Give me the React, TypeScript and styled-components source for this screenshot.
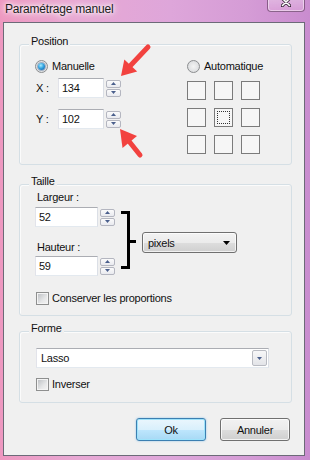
import styled, { createGlobalStyle } from 'styled-components';

const GlobalStyle = createGlobalStyle`
  html, body {
    margin: 0;
    padding: 0;
    background: #ffffff;
  }
  body {
    font-family: 'Liberation Sans', Arial, sans-serif;
    font-size: 11px;
    color: #000;
  }
  * {
    box-sizing: border-box;
  }
`;

const Window = styled.div`
  position: relative;
  width: 310px;
  height: 460px;
  display: flex;
  flex-direction: column;
  overflow: hidden;
  background: linear-gradient(
    90deg,
    #ee98c0 0%,
    #e8a8d4 25%,
    #dea6da 55%,
    #d59cd6 80%,
    #c98ccf 100%
  );
`;

const TitleBar = styled.div`
  height: 22px;
  flex-shrink: 0;
  display: flex;
  justify-content: space-between;
  align-items: flex-start;
  padding-left: 5px;
`;

const Title = styled.div`
  padding-top: 1px;
  font-size: 12px;
  line-height: 16px;
  letter-spacing: -0.2px;
  color: #1b1b1b;
  text-shadow: 0 0 6px #fff, 0 0 10px #fff, 0 0 3px rgba(255, 255, 255, 0.9);
`;

const CloseButton = styled.div`
  width: 38px;
  height: 20px;
  margin: -8px 5px 0 0;
  border: 1px solid rgba(90, 50, 90, 0.65);
  border-radius: 0 0 4px 4px;
  background: linear-gradient(180deg, rgba(255, 255, 255, 0.4), rgba(235, 180, 225, 0.35));
  box-shadow: inset 0 0 0 1px rgba(255, 255, 255, 0.45);
  display: flex;
  justify-content: center;
  align-items: flex-start;
  padding-top: 4px;
`;

const Client = styled.div`
  flex: 1;
  margin: 0 5px 4px 3px;
  border: 1px solid #6c6a78;
  background: #f0f0f0;
  display: flex;
  flex-direction: column;
  padding: 21px 12px 0 15px;
  letter-spacing: -0.25px;
  color: #111;
`;

const Group = styled.div<{ $h: number; $mt?: number }>`
  position: relative;
  height: ${(p) => p.$h}px;
  margin-top: ${(p) => p.$mt ?? 0}px;
  border: 1px solid #d5dfe5;
  border-radius: 3px;
  box-shadow: inset 1px 1px 0 #fbfbfb;
`;

const GroupLabel = styled.div`
  position: absolute;
  top: -10px;
  left: 9px;
  padding: 0 2px;
  line-height: 13px;
  background: #f0f0f0;
`;

const GroupBody = styled.div<{ $pt: number; $pl: number }>`
  padding: ${(p) => p.$pt}px 0 0 ${(p) => p.$pl}px;
`;

const SplitRow = styled.div`
  display: flex;
  align-items: flex-start;
`;

const Column = styled.div<{ $w?: number }>`
  display: flex;
  flex-direction: column;
  width: ${(p) => (p.$w ? `${p.$w}px` : 'auto')};
`;

const OptionRow = styled.div<{ $mt?: number; $pl?: number }>`
  display: flex;
  align-items: center;
  height: 13px;
  margin-top: ${(p) => p.$mt ?? 0}px;
  padding-left: ${(p) => p.$pl ?? 0}px;
`;

const Radio = styled.span<{ $checked?: boolean }>`
  width: 13px;
  height: 13px;
  border-radius: 50%;
  border: 1px solid #8b8d8f;
  background: radial-gradient(circle at 50% 50%, #f4f4f4 0%, #d4d6d8 100%);
  display: flex;
  align-items: center;
  justify-content: center;
  &::after {
    content: '';
    display: ${(p) => (p.$checked ? 'block' : 'none')};
    width: 7px;
    height: 7px;
    border-radius: 50%;
    background: radial-gradient(circle at 40% 35%, #a8ecff 0%, #35a4e0 45%, #0d4f9a 100%);
    box-shadow: 0 0 0 1px rgba(20, 70, 130, 0.35);
  }
`;

const Check = styled.span`
  width: 13px;
  height: 13px;
  border: 1px solid #8e8f8f;
  background: linear-gradient(135deg, #b9bcc0 0%, #e6e7e8 60%, #f4f4f4 100%);
  box-shadow: inset 0 0 0 1px #f4f4f4;
`;

const OptionText = styled.span<{ $gap: number }>`
  margin-left: ${(p) => p.$gap}px;
  line-height: 13px;
  white-space: nowrap;
`;

const FieldRow = styled.div<{ $mt?: number }>`
  display: flex;
  align-items: center;
  margin-top: ${(p) => p.$mt ?? 0}px;
`;

const FieldLabel = styled.span<{ $w: number }>`
  width: ${(p) => p.$w}px;
  padding-left: 1px;
`;

const Caption = styled.div<{ $mt?: number }>`
  line-height: 13px;
  padding-left: 2px;
  margin-top: ${(p) => p.$mt ?? 0}px;
  white-space: nowrap;
`;

const TextBox = styled.div<{ $w: number }>`
  width: ${(p) => p.$w}px;
  height: 20px;
  padding-left: 3px;
  line-height: 18px;
  background: #ffffff;
  border: 1px solid;
  border-color: #abadb3 #dbdfe6 #e3e9ef #e2e3ea;
`;

const Spinner = styled.div<{ $ml: number }>`
  display: flex;
  flex-direction: column;
  gap: 1px;
  margin-left: ${(p) => p.$ml}px;
`;

const SpinButton = styled.div`
  width: 15px;
  height: 8px;
  border: 1px solid #b4b6c0;
  border-radius: 2px;
  background: linear-gradient(180deg, #fbfbfb 0%, #e9eaef 100%);
  display: flex;
  align-items: center;
  justify-content: center;
`;

const AnchorGrid = styled.div`
  display: grid;
  grid-template-columns: repeat(3, 19px);
  grid-auto-rows: 19px;
  gap: 8px;
  margin-top: 8px;
`;

const AnchorCell = styled.div<{ $active?: boolean }>`
  border: 1px solid #7b7b7b;
  background: #f6f6f6;
  display: flex;
  align-items: center;
  justify-content: center;
  &::after {
    content: '';
    display: ${(p) => (p.$active ? 'block' : 'none')};
    width: 11px;
    height: 11px;
    border: 1px dotted #333;
  }
`;

const BracketMark = styled.svg`
  margin: 20px 0 0 5px;
  flex-shrink: 0;
`;

const UnitSelect = styled.div`
  width: 95px;
  height: 21px;
  margin: 41px 0 0 6px;
  padding: 0 6px 0 5px;
  border: 1px solid #707070;
  border-radius: 3px;
  background: linear-gradient(180deg, #f3f3f3 0%, #ebebeb 50%, #dddddd 51%, #cfcfcf 100%);
  box-shadow: inset 0 0 0 1px rgba(255, 255, 255, 0.7);
  display: flex;
  align-items: center;
  justify-content: space-between;
`;

const ComboBox = styled.div`
  width: 233px;
  height: 20px;
  padding: 0 1px 0 4px;
  background: #ffffff;
  border: 1px solid;
  border-color: #abadb3 #dbdfe6 #e3e9ef #e2e3ea;
  display: flex;
  align-items: center;
  justify-content: space-between;
`;

const ComboButton = styled.div`
  width: 15px;
  height: 16px;
  border: 1px solid #b9bbc2;
  border-radius: 2px;
  background: linear-gradient(180deg, #f7f7f8 0%, #e3e4e8 100%);
  display: flex;
  align-items: center;
  justify-content: center;
`;

const ButtonBar = styled.div`
  display: flex;
  justify-content: flex-end;
  gap: 14px;
  margin-top: 15px;
  padding-right: 2px;
`;

const DialogButton = styled.div<{ $default?: boolean }>`
  width: 70px;
  height: 23px;
  border-radius: 3px;
  display: flex;
  align-items: center;
  justify-content: center;
  border: 1px solid ${(p) => (p.$default ? '#3c7fb1' : '#707070')};
  background: ${(p) =>
    p.$default
      ? 'linear-gradient(180deg, #eaf6fd 0%, #d9f0fc 50%, #bee6fd 51%, #a7d9f5 100%)'
      : 'linear-gradient(180deg, #f2f2f2 0%, #ebebeb 50%, #dddddd 51%, #cfcfcf 100%)'};
  box-shadow: ${(p) =>
    p.$default
      ? 'inset 0 0 0 1px #9ee3fb, 0 0 2px rgba(60, 160, 230, 0.6)'
      : 'inset 0 0 0 1px rgba(255, 255, 255, 0.75)'};
`;

const Overlay = styled.svg`
  position: absolute;
  left: 0;
  top: 0;
  pointer-events: none;
`;

function SpinArrows() {
  return (
    <Spinner $ml={2}>
      <SpinButton>
        <svg width="5" height="3" viewBox="0 0 5 3">
          <path d="M0 3 L2.5 0 L5 3 Z" fill="#4a5f8c" />
        </svg>
      </SpinButton>
      <SpinButton>
        <svg width="5" height="3" viewBox="0 0 5 3">
          <path d="M0 0 L5 0 L2.5 3 Z" fill="#4a5f8c" />
        </svg>
      </SpinButton>
    </Spinner>
  );
}

const anchors = [0, 1, 2, 3, 4, 5, 6, 7, 8];

function App() {
  return (
    <>
      <GlobalStyle />
      <Window>
        <TitleBar>
          <Title>Paramétrage manuel</Title>
          <CloseButton>
            <svg width="10" height="10" viewBox="0 0 10 10">
              <path d="M1 1 L9 9 M9 1 L1 9" stroke="#3a2a3a" strokeWidth="3.2" strokeLinecap="round" />
              <path d="M1.5 1.5 L8.5 8.5 M8.5 1.5 L1.5 8.5" stroke="#ffffff" strokeWidth="1.6" strokeLinecap="round" />
            </svg>
          </CloseButton>
        </TitleBar>
        <Client>
          <Group $h={121}>
            <GroupLabel>Position</GroupLabel>
            <GroupBody $pt={15} $pl={15}>
              <SplitRow>
                <Column $w={152}>
                  <OptionRow>
                    <Radio $checked />
                    <OptionText $gap={4}>Manuelle</OptionText>
                  </OptionRow>
                  <FieldRow $mt={5}>
                    <FieldLabel $w={23}>X :</FieldLabel>
                    <TextBox $w={46}>134</TextBox>
                    <SpinArrows />
                  </FieldRow>
                  <FieldRow $mt={11}>
                    <FieldLabel $w={23}>Y :</FieldLabel>
                    <TextBox $w={46}>102</TextBox>
                    <SpinArrows />
                  </FieldRow>
                </Column>
                <Column>
                  <OptionRow>
                    <Radio />
                    <OptionText $gap={4}>Automatique</OptionText>
                  </OptionRow>
                  <AnchorGrid>
                    {anchors.map((i) => (
                      <AnchorCell key={i} $active={i === 4} />
                    ))}
                  </AnchorGrid>
                </Column>
              </SplitRow>
            </GroupBody>
          </Group>

          <Group $h={132} $mt={19}>
            <GroupLabel>Taille</GroupLabel>
            <GroupBody $pt={6} $pl={15}>
              <SplitRow>
                <Column $w={81}>
                  <Caption>Largeur :</Caption>
                  <FieldRow $mt={3}>
                    <TextBox $w={63}>52</TextBox>
                    <SpinArrows />
                  </FieldRow>
                  <Caption $mt={14}>Hauteur :</Caption>
                  <FieldRow $mt={2}>
                    <TextBox $w={63}>59</TextBox>
                    <SpinArrows />
                  </FieldRow>
                </Column>
                <BracketMark width="15" height="58" viewBox="0 0 15 58">
                  <rect x="0" y="0" width="9" height="3" fill="#000" />
                  <rect x="6" y="0" width="3" height="58" fill="#000" />
                  <rect x="0" y="55" width="9" height="3" fill="#000" />
                  <rect x="9" y="29" width="6" height="3" fill="#000" />
                </BracketMark>
                <UnitSelect>
                  <span>pixels</span>
                  <svg width="7" height="4" viewBox="0 0 7 4">
                    <path d="M0 0 L7 0 L3.5 4 Z" fill="#000" />
                  </svg>
                </UnitSelect>
              </SplitRow>
              <OptionRow $mt={16} $pl={1}>
                <Check />
                <OptionText $gap={3}>Conserver les proportions</OptionText>
              </OptionRow>
            </GroupBody>
          </Group>

          <Group $h={72} $mt={15}>
            <GroupLabel>Forme</GroupLabel>
            <GroupBody $pt={16} $pl={16}>
              <ComboBox>
                <span>Lasso</span>
                <ComboButton>
                  <svg width="5" height="3" viewBox="0 0 5 3">
                    <path d="M0 0 L5 0 L2.5 3 Z" fill="#4a5f8c" />
                  </svg>
                </ComboButton>
              </ComboBox>
              <OptionRow $mt={10}>
                <Check />
                <OptionText $gap={3}>Inverser</OptionText>
              </OptionRow>
            </GroupBody>
          </Group>

          <ButtonBar>
            <DialogButton $default>Ok</DialogButton>
            <DialogButton>Annuler</DialogButton>
          </ButtonBar>
        </Client>

        <Overlay width="310" height="460" viewBox="0 0 310 460">
          <path d="M148 47 L131 65" stroke="#f2423f" strokeWidth="5" strokeLinecap="round" />
          <path d="M121 76 L124.3 59.5 L137.2 71.6 Z" fill="#f2423f" />
          <path d="M140 155 L128 140" stroke="#f2423f" strokeWidth="5" strokeLinecap="round" />
          <path d="M120 129 L137 136 L122.5 148 Z" fill="#f2423f" />
        </Overlay>
      </Window>
    </>
  );
}

export default App;
